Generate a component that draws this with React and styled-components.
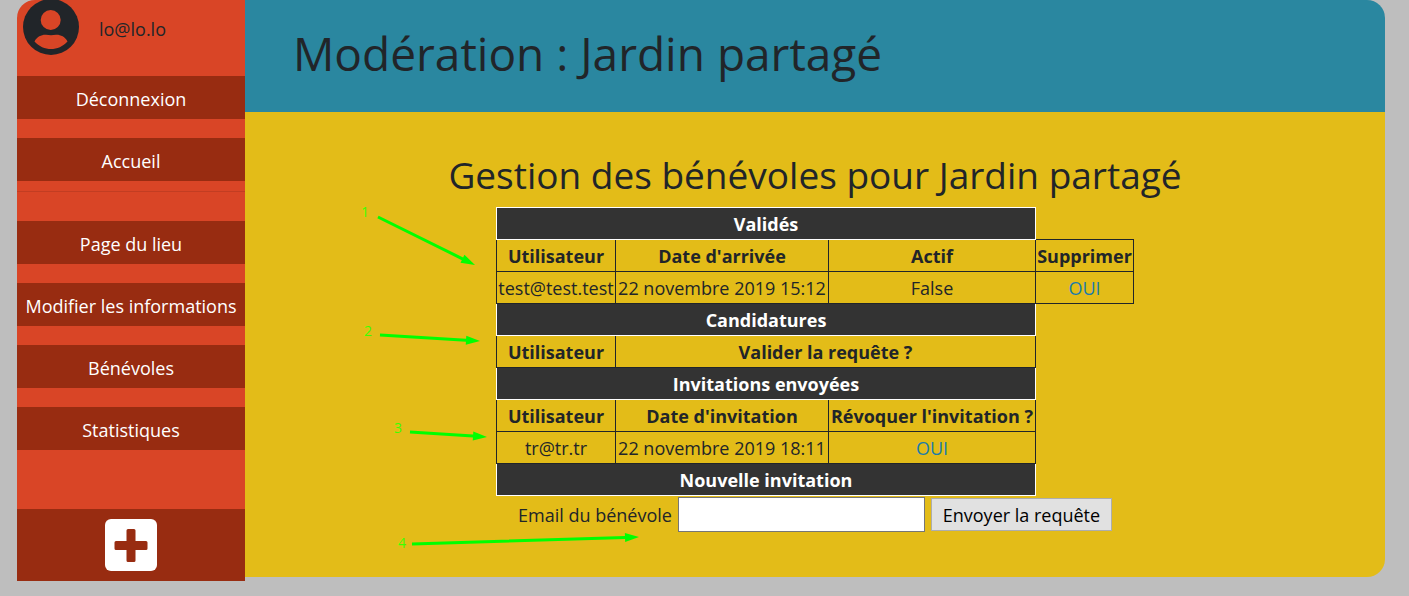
import React from 'react';
import styled, { createGlobalStyle } from 'styled-components';

const GlobalStyle = createGlobalStyle`
  *, *::before, *::after { box-sizing: border-box; }
  body {
    margin: 0;
    background: #bebebe;
    color: #212529;
    font-family: 'Open Sans', 'Noto Sans', sans-serif;
    font-size: 18px;
    line-height: 30px;
  }
`;

const Page = styled.div`
  display: grid;
  grid-template-columns: minmax(228px, 1fr) 5fr;
  margin: 0 24px 15px 17px;
`;

const Sidebar = styled.aside`
  display: flex;
  flex-direction: column;
  background: #d94526;
  border-top-left-radius: 18px;
`;

const Profile = styled.div`
  display: flex;
  align-items: flex-start;
  gap: 20px;
  height: 76px;
  padding-left: 6px;
`;

const Avatar = styled.svg`
  width: 56px;
  height: 56px;
  flex: none;
`;

const UserName = styled.span`
  padding-top: 14px;
`;

const NavGroup = styled.nav`
  display: flex;
  flex-direction: column;
  gap: 19px;
`;

const NavLink = styled.a`
  display: block;
  padding: 8px 0 5px;
  background: #982c11;
  color: #fff;
  text-align: center;
  text-decoration: none;
  white-space: nowrap;
`;

const Divider = styled.hr`
  width: 100%;
  margin: 10px 0 29px;
  border: 0;
  border-top: 1px solid rgba(0, 0, 0, 0.1);
`;

const AddLink = styled.a`
  display: flex;
  align-items: center;
  justify-content: center;
  height: 72px;
  margin-top: 59px;
  background: #982c11;
`;

const PlusIcon = styled.svg`
  width: 52px;
  height: 52px;
`;

const Main = styled.main`
  display: flex;
  flex-direction: column;
  margin-bottom: 4px;
`;

const Header = styled.header`
  padding: 23px 48px 29px;
  background: #2a87a0;
  border-top-right-radius: 18px;
`;

const Title = styled.h1`
  margin: 0;
  font-size: 46px;
  font-weight: 400;
  line-height: 60px;
`;

const Content = styled.section`
  position: relative;
  flex: 1;
  display: flex;
  flex-direction: column;
  align-items: center;
  padding-top: 39px;
  background: #e3bc18;
  border-bottom-right-radius: 18px;
`;

const Subtitle = styled.h2`
  margin: 0 0 8px;
  font-size: 37px;
  font-weight: 400;
  line-height: 48px;
`;

const Table = styled.table`
  width: 638px;
  table-layout: fixed;
  border-collapse: collapse;
  text-align: center;
  white-space: nowrap;
`;

const Col = styled.col`
  width: ${(p) => p.$width}px;
`;

const Cell = styled.td`
  height: 32px;
  padding: 2px 0 0;
  border: 1px solid #212529;
  line-height: 29px;
`;

const HeadCell = styled(Cell).attrs({ as: 'th' })`
  font-weight: 700;
`;

const SectionCell = styled(HeadCell)`
  background: #333;
  border-color: #fff;
  color: #fff;
`;

const ActionLink = styled.a`
  color: #1c7ca8;
  text-decoration: none;
`;

const InviteForm = styled.form`
  display: flex;
  align-items: center;
  gap: 6px;
  margin-top: 1px;
`;

const EmailInput = styled.input`
  width: 247px;
  height: 35px;
  padding: 1px 2px;
  border: 1px solid #767676;
  background: #fff;
  font: inherit;
`;

const SubmitButton = styled.button`
  width: 181px;
  height: 33px;
  padding: 2px 0 0;
  border: 1px solid #adadad;
  background: #e1e1e1;
  color: #000;
  font: inherit;
  line-height: 29px;
  white-space: nowrap;
`;

const Annotations = styled.svg`
  position: absolute;
  top: 88px;
  left: 50%;
  width: 300px;
  height: 360px;
  margin-left: -465px;
  pointer-events: none;
`;

const Digit = styled.text`
  fill: #3cff00;
  font-family: 'Open Sans', sans-serif;
  font-size: 14px;
  font-weight: 400;
`;

const arrows = [
  { label: '1', lx: 11, ly: 17, x1: 28, y1: 17, x2: 125, y2: 65 },
  { label: '2', lx: 14, ly: 136, x1: 30, y1: 135, x2: 130, y2: 141 },
  { label: '3', lx: 44, ly: 233, x1: 60, y1: 232, x2: 137, y2: 237 },
  { label: '4', lx: 48, ly: 348, x1: 62, y1: 344, x2: 289, y2: 337 },
];

function Arrow({ label, lx, ly, x1, y1, x2, y2 }) {
  const angle = (Math.atan2(y2 - y1, x2 - x1) * 180) / Math.PI;
  const length = Math.hypot(x2 - x1, y2 - y1);
  return (
    <g fill="#00ff00">
      <Digit x={lx} y={ly}>{label}</Digit>
      <g transform={`translate(${x1} ${y1}) rotate(${angle})`}>
        <path d={`M0 -1.5H${length - 14}V-4.5L${length} 0L${length - 14} 4.5V1.5H0Z`} />
      </g>
    </g>
  );
}

export default function App() {
  return (
    <>
      <GlobalStyle />
      <Page>
        <Sidebar>
          <Profile>
            <Avatar viewBox="0 1 56 56" aria-hidden="true">
              <circle cx="28" cy="28" r="28" fill="#212529" />
              <circle cx="27.7" cy="21" r="10" fill="#d94526" />
              <path d="M11.5 42.5C14 37.500 19 35.500 23 35.800Q28 36.500 33 35.800C37 35.500 42 37.500 44.500 42.500C40 47.500 34 50 28 50S16 47.500 11.500 42.500Z" fill="#d94526" />
            </Avatar>
            <UserName>lo@lo.lo</UserName>
          </Profile>
          <NavGroup aria-label="Compte">
            <NavLink href="#deconnexion">Déconnexion</NavLink>
            <NavLink href="#accueil">Accueil</NavLink>
          </NavGroup>
          <Divider />
          <NavGroup aria-label="Lieu">
            <NavLink href="#page">Page du lieu</NavLink>
            <NavLink href="#modifier">Modifier les informations</NavLink>
            <NavLink href="#benevoles">Bénévoles</NavLink>
            <NavLink href="#statistiques">Statistiques</NavLink>
          </NavGroup>
          <AddLink href="#ajouter" aria-label="Ajouter">
            <PlusIcon viewBox="0 0 52 52" aria-hidden="true">
              <rect width="52" height="52" rx="6" fill="#fff" />
              <path d="M23 10h6q1.500 0 1.500 1.500V22H41q1.500 0 1.500 1.500v6q0 1.500-1.500 1.500H30.500v10.500q0 1.500-1.500 1.500h-6q-1.500 0-1.500-1.500V31H11q-1.500 0-1.500-1.500v-6q0-1.500 1.500-1.500h10.500V11.500q0-1.500 1.500-1.500Z" fill="#982c11" />
            </PlusIcon>
          </AddLink>
        </Sidebar>
        <Main>
          <Header>
            <Title>Modération : Jardin partagé</Title>
          </Header>
          <Content>
            <Subtitle>Gestion des bénévoles pour Jardin partagé</Subtitle>
            <Table>
              <colgroup>
                <Col $width={119} />
                <Col $width={213} />
                <Col $width={207} />
                <Col $width={98} />
              </colgroup>
              <tbody>
                <tr>
                  <SectionCell colSpan={3}>Validés</SectionCell>
                </tr>
                <tr>
                  <HeadCell>Utilisateur</HeadCell>
                  <HeadCell>Date d'arrivée</HeadCell>
                  <HeadCell>Actif</HeadCell>
                  <HeadCell>Supprimer</HeadCell>
                </tr>
                <tr>
                  <Cell>test@test.test</Cell>
                  <Cell>22 novembre 2019 15:12</Cell>
                  <Cell>False</Cell>
                  <Cell><ActionLink href="#supprimer">OUI</ActionLink></Cell>
                </tr>
                <tr>
                  <SectionCell colSpan={3}>Candidatures</SectionCell>
                </tr>
                <tr>
                  <HeadCell>Utilisateur</HeadCell>
                  <HeadCell colSpan={2}>Valider la requête ?</HeadCell>
                </tr>
                <tr>
                  <SectionCell colSpan={3}>Invitations envoyées</SectionCell>
                </tr>
                <tr>
                  <HeadCell>Utilisateur</HeadCell>
                  <HeadCell>Date d'invitation</HeadCell>
                  <HeadCell>Révoquer l'invitation ?</HeadCell>
                </tr>
                <tr>
                  <Cell>tr@tr.tr</Cell>
                  <Cell>22 novembre 2019 18:11</Cell>
                  <Cell><ActionLink href="#revoquer">OUI</ActionLink></Cell>
                </tr>
                <tr>
                  <SectionCell colSpan={3}>Nouvelle invitation</SectionCell>
                </tr>
              </tbody>
            </Table>
            <InviteForm>
              <label htmlFor="email">Email du bénévole</label>
              <EmailInput id="email" type="email" />
              <SubmitButton type="button">Envoyer la requête</SubmitButton>
            </InviteForm>
            <Annotations viewBox="0 0 300 360">
              {arrows.map((a) => <Arrow key={a.label} {...a} />)}
            </Annotations>
          </Content>
        </Main>
      </Page>
    </>
  );
}
